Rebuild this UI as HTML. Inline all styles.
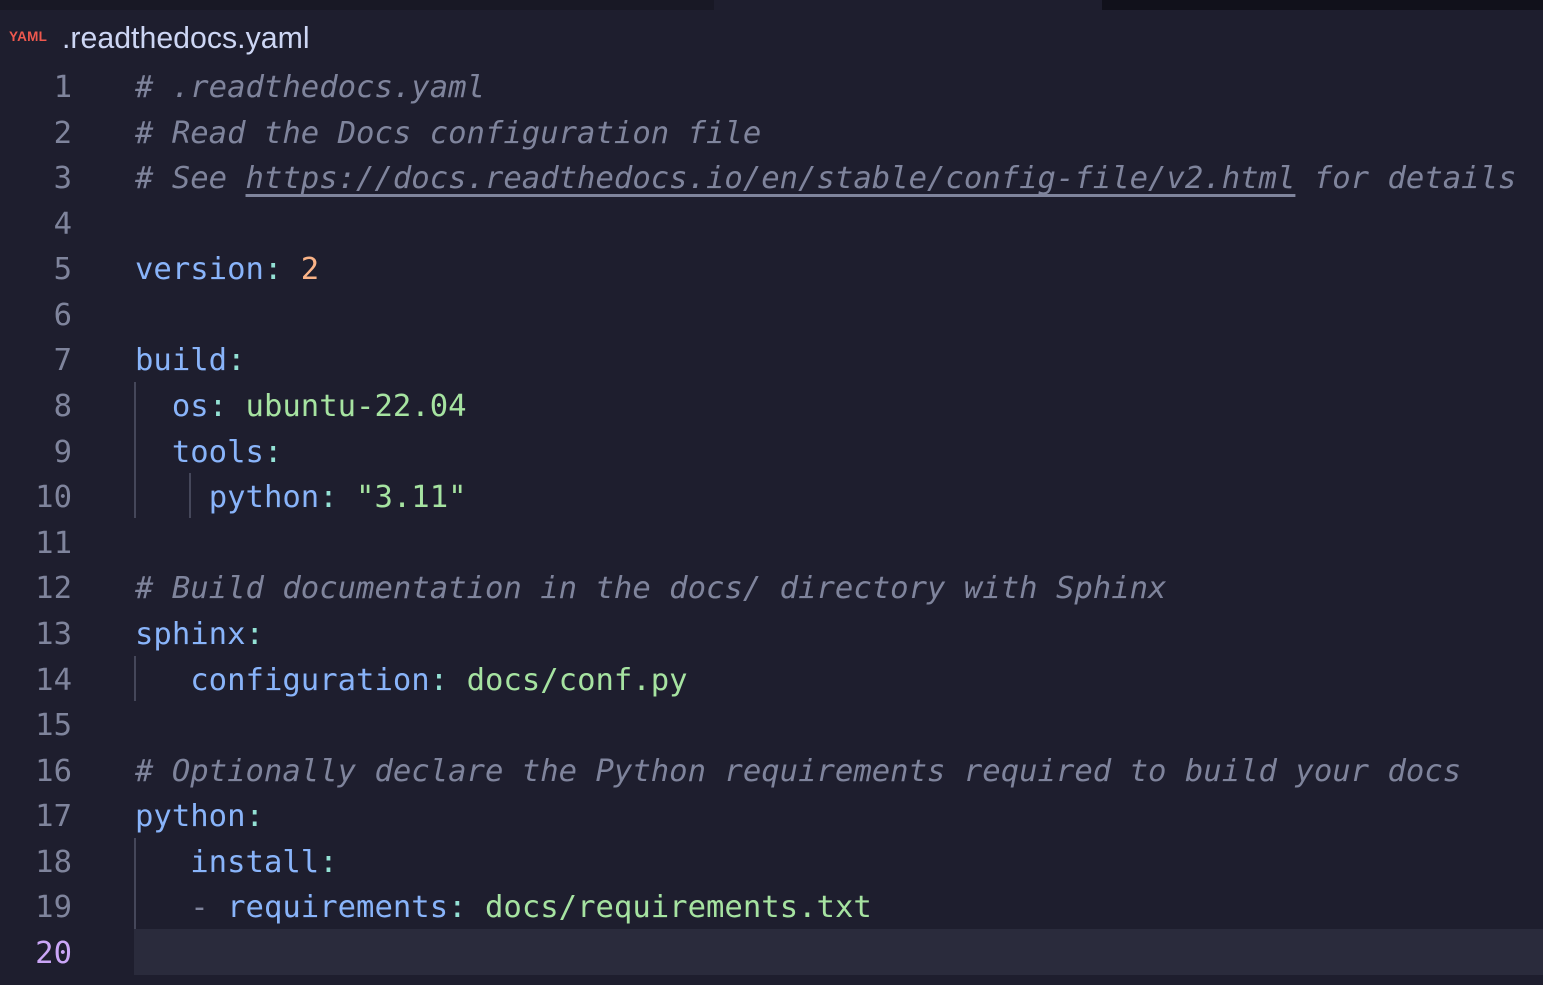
<!DOCTYPE html>
<html><head><meta charset="utf-8"><style>
html,body{margin:0;padding:0;background:#1e1e2e;width:1543px;height:985px;overflow:hidden;position:relative}
.top{position:absolute;left:0;top:0;height:10px;background:#181825}
.title{position:absolute;left:62px;top:19px;font-family:"Liberation Sans",sans-serif;font-size:30.3px;color:#cdd6f4;line-height:40px}
.yaml{position:absolute;left:9px;top:29px;font-family:"Liberation Sans",sans-serif;font-weight:bold;font-size:13.5px;color:#f0584e;letter-spacing:0.3px}
.code{position:absolute;left:0;top:65px;font-family:"DejaVu Sans Mono",monospace;font-size:30.6px;line-height:45.58px;white-space:pre}
.ln{position:absolute;left:0;width:72px;text-align:right;color:#7f849c}
.tx{position:absolute;left:135px}
.c{color:#7f849c;font-style:italic}
.k{color:#89b4fa}.p{color:#94e2d5}.s{color:#a6e3a1}.n{color:#fab387}.d{color:#7f849c}
.u{text-decoration:underline;text-underline-offset:6px}
.g{position:absolute;width:2px;background:#45475a}
.hl{position:absolute;left:134px;right:0;top:929px;height:46px;background:#2a2b3c}
</style></head><body>
<div class="top" style="width:714px"></div>
<div class="top" style="left:1102px;width:441px;background:#11111b"></div>
<div class="hl"></div>
<div class="yaml">YAML</div>
<div class="title">.readthedocs.yaml</div>
<div class="g" style="left:134px;top:382px;height:136px"></div>
<div class="g" style="left:189px;top:473px;height:45px"></div>
<div class="g" style="left:134px;top:656px;height:45px"></div>
<div class="g" style="left:134px;top:838px;height:91px"></div>
<div class="code">
<div class="ln" style="top:0">1</div><div class="tx c" style="top:0"># .readthedocs.yaml</div>
<div class="ln" style="top:45.58px">2</div><div class="tx c" style="top:45.58px"># Read the Docs configuration file</div>
<div class="ln" style="top:91.16px">3</div><div class="tx c" style="top:91.16px"># See <span class="u">https://docs.readthedocs.io/en/stable/config-file/v2.html</span> for details</div>
<div class="ln" style="top:136.74px">4</div>
<div class="ln" style="top:182.32px">5</div><div class="tx" style="top:182.32px"><span class="k">version</span><span class="p">:</span> <span class="n">2</span></div>
<div class="ln" style="top:227.9px">6</div>
<div class="ln" style="top:273.48px">7</div><div class="tx" style="top:273.48px"><span class="k">build</span><span class="p">:</span></div>
<div class="ln" style="top:319.06px">8</div><div class="tx" style="top:319.06px">  <span class="k">os</span><span class="p">:</span> <span class="s">ubuntu-22.04</span></div>
<div class="ln" style="top:364.64px">9</div><div class="tx" style="top:364.64px">  <span class="k">tools</span><span class="p">:</span></div>
<div class="ln" style="top:410.22px">10</div><div class="tx" style="top:410.22px">    <span class="k">python</span><span class="p">:</span> <span class="s">"3.11"</span></div>
<div class="ln" style="top:455.8px">11</div>
<div class="ln" style="top:501.38px">12</div><div class="tx c" style="top:501.38px"># Build documentation in the docs/ directory with Sphinx</div>
<div class="ln" style="top:546.96px">13</div><div class="tx" style="top:546.96px"><span class="k">sphinx</span><span class="p">:</span></div>
<div class="ln" style="top:592.54px">14</div><div class="tx" style="top:592.54px">   <span class="k">configuration</span><span class="p">:</span> <span class="s">docs/conf.py</span></div>
<div class="ln" style="top:638.12px">15</div>
<div class="ln" style="top:683.7px">16</div><div class="tx c" style="top:683.7px"># Optionally declare the Python requirements required to build your docs</div>
<div class="ln" style="top:729.28px">17</div><div class="tx" style="top:729.28px"><span class="k">python</span><span class="p">:</span></div>
<div class="ln" style="top:774.86px">18</div><div class="tx" style="top:774.86px">   <span class="k">install</span><span class="p">:</span></div>
<div class="ln" style="top:820.44px">19</div><div class="tx" style="top:820.44px">   <span class="d">-</span> <span class="k">requirements</span><span class="p">:</span> <span class="s">docs/requirements.txt</span></div>
<div class="ln" style="top:866.02px;color:#cba6f7">20</div>
</div>
</body></html>
